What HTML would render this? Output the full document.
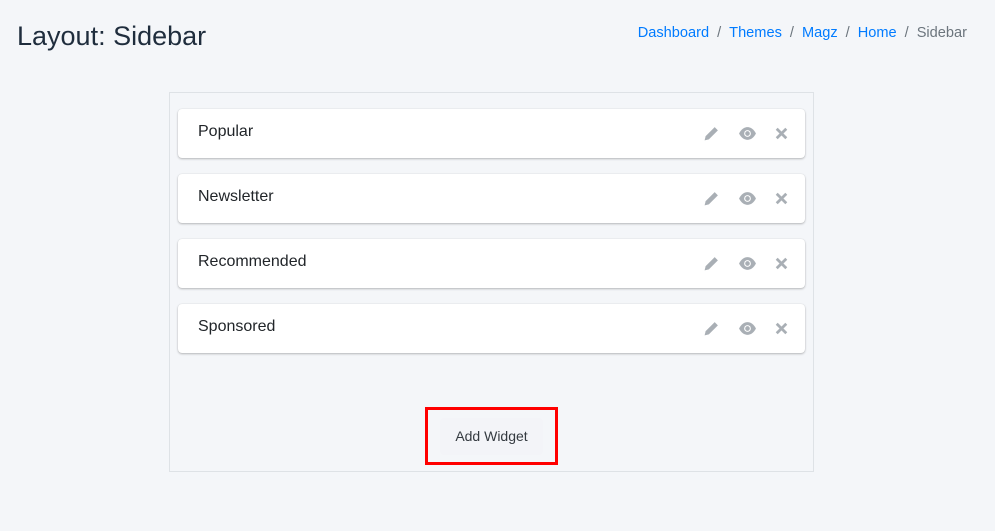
<!DOCTYPE html>
<html><head><meta charset="utf-8"><style>
*{box-sizing:border-box;margin:0;padding:0}
body{width:995px;height:531px;background:#f4f6f9;font-family:"Liberation Sans",sans-serif;position:relative;overflow:hidden;color:#212529}
h1{position:absolute;left:17px;top:21px;font-size:27px;font-weight:400;color:#1f2d3d}
.bc{position:absolute;right:28px;top:25px;font-size:14.6px;color:#6c757d}
.bc a{color:#007bff;text-decoration:none}
.bc span.s{margin:0 8px;color:#6c757d}
.wrap{position:absolute;left:169px;top:92px;width:645px;height:380px;border:1px solid #dee2e6;background:#f4f6f9}
.card{position:absolute;left:8px;width:627px;height:49px;background:#fff;border-radius:4px;box-shadow:0 1px 2px rgba(0,0,0,.25),0 0 1px rgba(0,0,0,.13)}
.card .t{position:absolute;left:20px;top:14px;font-size:16px;color:#212529}
.ic{position:absolute;top:16px}
.red{position:absolute;left:425px;top:407px;width:133px;height:58px;border:3px solid #f00}
.btn{position:absolute;left:440px;top:418px;width:103px;height:37px;background:#f3f4f8;border-radius:4px;font-size:14px;color:#343a40;text-align:center;line-height:37px}
</style></head><body>
<h1>Layout: Sidebar</h1>
<div class="bc"><a>Dashboard</a><span class="s">/</span><a>Themes</a><span class="s">/</span><a>Magz</a><span class="s">/</span><a>Home</a><span class="s">/</span>Sidebar</div>
<div class="wrap">
<div class="card" style="top:16px"><div class="t">Popular</div>
<svg class="ic" style="left:525px" width="17" height="17" viewBox="0 0 16 16"><path d="M1.5 14.5l1-4 8.5-8.5 3 3-8.5 8.5z" fill="#a9afb5"/></svg>
<svg class="ic" style="left:560px" width="19" height="17" viewBox="0 0 18 16"><path d="M1 8c2-4 5-6 8-6s6 2 8 6c-2 4-5 6-8 6S3 12 1 8z" fill="#a9afb5"/><circle cx="9" cy="8" r="3.2" fill="#fff"/><circle cx="9" cy="8" r="2.2" fill="#a9afb5"/></svg>
<svg class="ic" style="left:597px" width="13" height="17" viewBox="0 0 12 16"><path d="M1.5 3.5l9 9M10.5 3.5l-9 9" stroke="#a9afb5" stroke-width="2.6"/></svg></div>
<div class="card" style="top:81px"><div class="t">Newsletter</div>
<svg class="ic" style="left:525px" width="17" height="17" viewBox="0 0 16 16"><path d="M1.5 14.5l1-4 8.5-8.5 3 3-8.5 8.5z" fill="#a9afb5"/></svg>
<svg class="ic" style="left:560px" width="19" height="17" viewBox="0 0 18 16"><path d="M1 8c2-4 5-6 8-6s6 2 8 6c-2 4-5 6-8 6S3 12 1 8z" fill="#a9afb5"/><circle cx="9" cy="8" r="3.2" fill="#fff"/><circle cx="9" cy="8" r="2.2" fill="#a9afb5"/></svg>
<svg class="ic" style="left:597px" width="13" height="17" viewBox="0 0 12 16"><path d="M1.5 3.5l9 9M10.5 3.5l-9 9" stroke="#a9afb5" stroke-width="2.6"/></svg></div>
<div class="card" style="top:146px"><div class="t">Recommended</div>
<svg class="ic" style="left:525px" width="17" height="17" viewBox="0 0 16 16"><path d="M1.5 14.5l1-4 8.5-8.5 3 3-8.5 8.5z" fill="#a9afb5"/></svg>
<svg class="ic" style="left:560px" width="19" height="17" viewBox="0 0 18 16"><path d="M1 8c2-4 5-6 8-6s6 2 8 6c-2 4-5 6-8 6S3 12 1 8z" fill="#a9afb5"/><circle cx="9" cy="8" r="3.2" fill="#fff"/><circle cx="9" cy="8" r="2.2" fill="#a9afb5"/></svg>
<svg class="ic" style="left:597px" width="13" height="17" viewBox="0 0 12 16"><path d="M1.5 3.5l9 9M10.5 3.5l-9 9" stroke="#a9afb5" stroke-width="2.6"/></svg></div>
<div class="card" style="top:211px"><div class="t">Sponsored</div>
<svg class="ic" style="left:525px" width="17" height="17" viewBox="0 0 16 16"><path d="M1.5 14.5l1-4 8.5-8.5 3 3-8.5 8.5z" fill="#a9afb5"/></svg>
<svg class="ic" style="left:560px" width="19" height="17" viewBox="0 0 18 16"><path d="M1 8c2-4 5-6 8-6s6 2 8 6c-2 4-5 6-8 6S3 12 1 8z" fill="#a9afb5"/><circle cx="9" cy="8" r="3.2" fill="#fff"/><circle cx="9" cy="8" r="2.2" fill="#a9afb5"/></svg>
<svg class="ic" style="left:597px" width="13" height="17" viewBox="0 0 12 16"><path d="M1.5 3.5l9 9M10.5 3.5l-9 9" stroke="#a9afb5" stroke-width="2.6"/></svg></div>
</div>
<div class="btn">Add Widget</div>
<div class="red"></div>
</body></html>
